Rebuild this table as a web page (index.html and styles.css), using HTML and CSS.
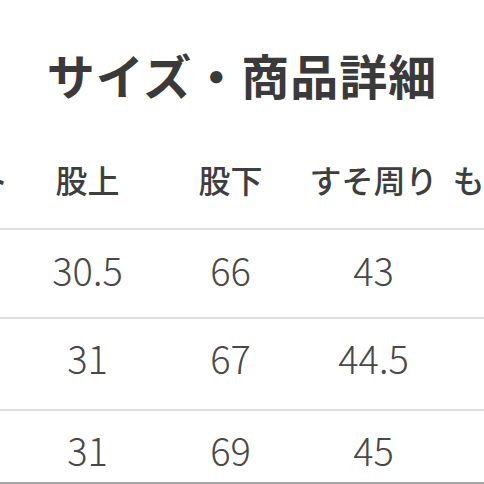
FILE: index.html
```html
<!DOCTYPE html>
<html lang="ja">
<head>
<meta charset="utf-8">
<link rel="stylesheet" href="styles.css">
</head>
<body>
<div class="page">
  <h1 class="title">サイズ・商品詳細</h1>
  <div class="table">
    <div class="row head">
      <div class="cell">ウエスト</div>
      <div class="cell">股上</div>
      <div class="cell">股下</div>
      <div class="cell">すそ周り</div>
      <div class="cell">もも周り</div>
    </div>
    <div class="row r1">
      <div class="cell"></div>
      <div class="cell">30.5</div>
      <div class="cell">66</div>
      <div class="cell">43</div>
      <div class="cell"></div>
    </div>
    <div class="row r2">
      <div class="cell"></div>
      <div class="cell">31</div>
      <div class="cell">67</div>
      <div class="cell">44.5</div>
      <div class="cell"></div>
    </div>
    <div class="row r3">
      <div class="cell"></div>
      <div class="cell">31</div>
      <div class="cell">69</div>
      <div class="cell">45</div>
      <div class="cell"></div>
    </div>
  </div>
</div>
</body>
</html>
```

FILE: styles.css
```css
html, body {
  margin: 0;
  padding: 0;
  background: #ffffff;
}
.page {
  width: 484px;
  height: 484px;
  overflow: hidden;
  font-family: "Noto Sans CJK JP", "Noto Sans", sans-serif;
}
.title {
  margin: 50px 0 0 0;
  font-size: 48px;
  line-height: 48px;
  font-weight: 700;
  color: #3a3a3a;
  text-align: center;
  letter-spacing: 1px;
}
.row {
  display: grid;
  grid-template-columns: repeat(5, 143px);
  grid-auto-rows: auto;
  margin-left: -127px;
  width: 715px;
  border-bottom: 2px solid #dedede;
  box-sizing: border-box;
}
.row .cell {
  text-align: center;
  white-space: nowrap;
  min-height: 1px;
}
.head {
  padding-top: 65px;
  padding-bottom: 33px;
  font-size: 32px;
  line-height: 32px;
  font-weight: 500;
  color: #3e3e3e;
}
.r1, .r2, .r3 {
  font-size: 38px;
  line-height: 38px;
  font-weight: 300;
  color: #484848;
}
.r1 {
  padding-top: 21px;
  padding-bottom: 28px;
}
.r2 {
  padding-top: 20px;
  padding-bottom: 32px;
}
.r3 {
  padding-top: 20px;
  padding-bottom: 13px;
  border-bottom: 2px solid #a8a8a8;
}
```
